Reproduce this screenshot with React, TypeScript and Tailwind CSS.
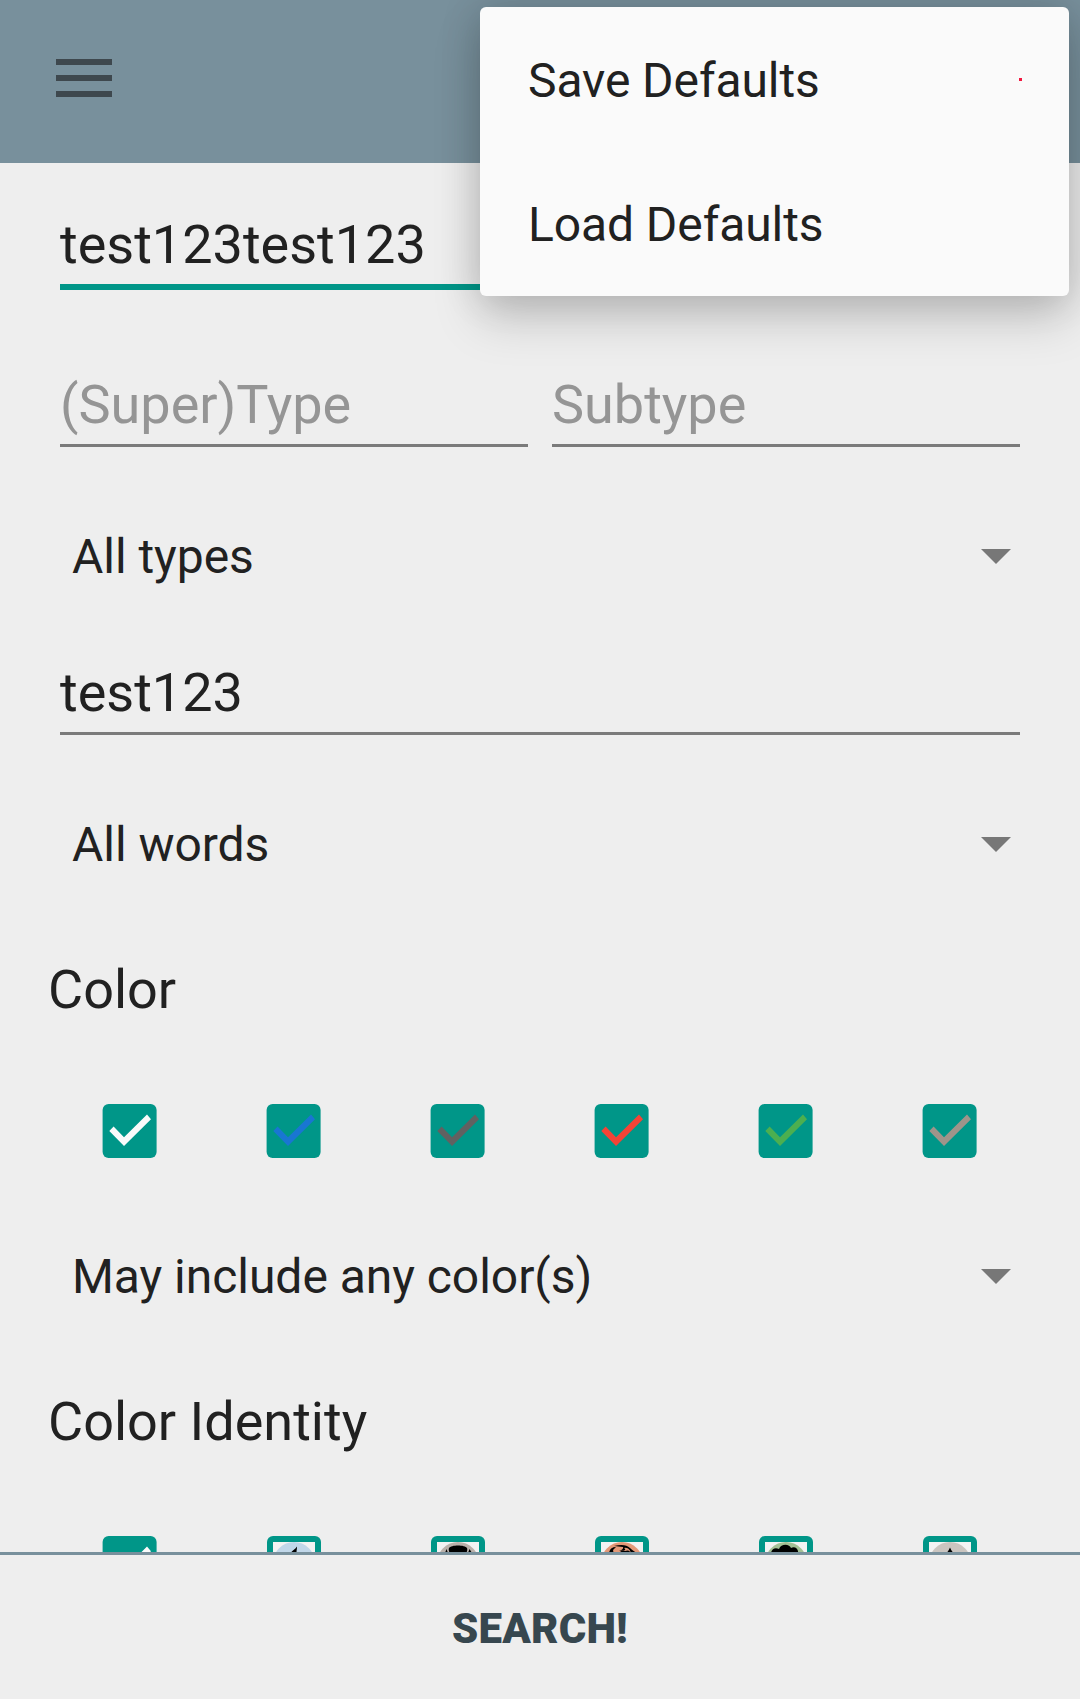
import type { ReactNode } from 'react';

const CHECK = 'M6.3 27 L10.6 22.4 L21 33.2 L44 10.6 L48 15.3 L21 42 Z';

function CheckBox({ color }: { color: string }) {
  return (
    <svg width="54" height="54" viewBox="0 0 54 54" className="block shrink-0 overflow-visible">
      <rect x="-0.4" width="54" height="54" rx="6" fill="#009688" />
      <path d={CHECK} fill={color} />
    </svg>
  );
}

function ManaBox({ disc, children }: { disc: string; children: ReactNode }) {
  return (
    <svg width="54" height="54" viewBox="0 0 54 54" className="block shrink-0">
      <rect width="54" height="54" rx="6" fill="#009688" />
      <rect x="6" y="6" width="42" height="42" fill="#f3f3f3" />
      <circle cx="27" cy="27" r="21" fill={disc} />
      {children}
    </svg>
  );
}

function Spinner({ label }: { label: string }) {
  return (
    <div className="flex h-[145px] items-center justify-between pr-[69px] pl-[72px] text-[48px] tracking-[-0.04px]">
      <span>{label}</span>
      <svg width="30" height="15" viewBox="0 0 30 15" className="block">
        <path d="M0 0H30L15 15Z" fill="#777777" />
      </svg>
    </div>
  );
}

function Heading({ children }: { children: ReactNode }) {
  return <div className="pl-[48px] text-[54px] leading-[63px]">{children}</div>;
}

export default function App() {
  return (
    <div className="relative flex h-[1699px] w-[1080px] flex-col overflow-hidden bg-[#eeeeee] font-[Roboto,sans-serif] text-[#212121]">
      <header className="h-[163px] shrink-0 bg-[#78909c] pt-[59px] pl-[56px]">
        <div className="flex w-[56px] flex-col gap-[10px]">
          <span className="h-[6px] bg-[#3e484e]" />
          <span className="h-[6px] bg-[#3e484e]" />
          <span className="h-[6px] bg-[#3e484e]" />
        </div>
      </header>

      <main className="h-[1389px] shrink-0 overflow-hidden">
        <div className="mx-[60px] border-b-[6px] border-[#009688] pt-[50px] pb-[8px] text-[54px] leading-[63px]">
          test123test123
        </div>
        <div className="mx-[60px] mt-[83px] grid grid-cols-2 gap-[24px] text-[54px] leading-[63px] text-[#959595]">
          <div className="border-b-[3px] border-[#7a7a7a] pb-[8px]">(Super)Type</div>
          <div className="border-b-[3px] border-[#7a7a7a] pb-[8px]">Subtype</div>
        </div>
        <div className="mt-[37px]">
          <Spinner label="All types" />
        </div>
        <div className="mx-[60px] mt-[32px] border-b-[3px] border-[#7a7a7a] pb-[8px] text-[54px] leading-[63px]">
          test123
        </div>
        <div className="mt-[37px]">
          <Spinner label="All words" />
        </div>
        <div className="mt-[41px]">
          <Heading>Color</Heading>
        </div>
        <div className="mt-[83px] flex gap-[110px] pl-[103px]">
          <CheckBox color="#fafafa" />
          <CheckBox color="#1976d2" />
          <CheckBox color="#616161" />
          <CheckBox color="#f44336" />
          <CheckBox color="#4caf50" />
          <CheckBox color="#9e948a" />
        </div>
        <div className="mt-[46px]">
          <Spinner label="May include any color(s)" />
        </div>
        <div className="mt-[41px]">
          <Heading>Color Identity</Heading>
        </div>
        <div className="mt-[83px] flex gap-[110px] pl-[103px]">
          <CheckBox color="#fafafa" />
          <ManaBox disc="#c1d7e9">
            <path d="M30 10.5C28 14 25 14 23.5 17.5L20 25H34L29.5 17C29.5 14 30 13 30 10.5Z" fill="#000" />
          </ManaBox>
          <ManaBox disc="#bab1ab">
            <path d="M18 12C20 8.500 34 8.500 36 12C37 15 35 16 35 20H19C19 16 17 15 18 12Z" fill="#000" />
            <path d="M15.500 13L17 17H14ZM38.500 13L37 17H41Z" fill="#000" />
          </ManaBox>
          <ManaBox disc="#e49977">
            <path d="M14 17Q15 11 21 11L18 14Q19 16 17 20H13ZM19 10Q30 7 35 12Q38 15 42 17H36Q34 11 29 12Q33 15 24 15Q29 13 28 11ZM23 20Q24 14 30 15Q36 13 36 20Z" fill="#000" />
          </ManaBox>
          <ManaBox disc="#a3c095">
            <path d="M12 18C12 13 16 11 20 13C22 7 31 8 32 12C36 10 40 13 39 18Z" fill="#000" />
          </ManaBox>
          <ManaBox disc="#cac5c0">
            <path d="M27 11.500Q28 14 30 16.500L35 27H19L24 16.500Q26 14 27 11.500Z" fill="#000" />
          </ManaBox>
        </div>
      </main>

      <footer className="flex h-[147px] shrink-0 items-center justify-center border-t-[3px] border-[#78909c] pt-[3px] text-[42px] font-black tracking-[0.2px] text-[#37474f]">
        SEARCH!
      </footer>

      <div className="absolute top-[7px] left-[480px] flex h-[289px] w-[588.6px] flex-col rounded-[6px] bg-[#fafafa] text-[48px] tracking-[-0.09px] shadow-[0_24px_48px_rgba(0,0,0,0.17),0_0_40px_rgba(0,0,0,0.16)]">
        <div className="flex h-[148px] items-center justify-between pr-[46.6px] pl-[48px]">
          <span>Save Defaults</span>
          <span className="mb-[3px] h-[3px] w-[3px] bg-[#f2183f]" />
        </div>
        <div className="flex h-[140px] items-center pl-[48px]">Load Defaults</div>
      </div>
    </div>
  );
}
